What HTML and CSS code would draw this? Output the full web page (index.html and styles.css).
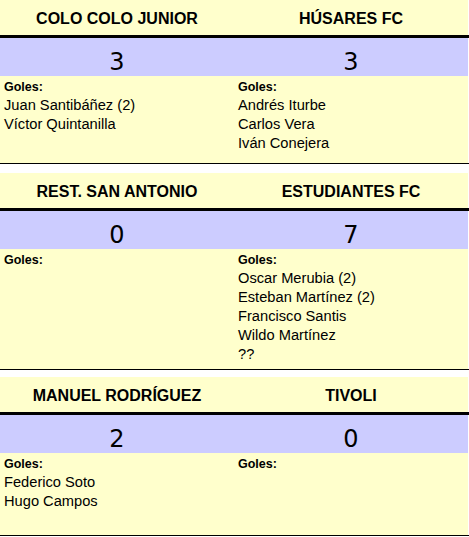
FILE: index.html
```html
<!DOCTYPE html>
<html lang="es">
<head>
<meta charset="utf-8">
<title>Resultados</title>
<link rel="stylesheet" href="styles.css">
</head>
<body>
<div class="match match--1">
  <div class="row row--teams">
    <div class="team">COLO COLO JUNIOR</div>
    <div class="team">HÚSARES FC</div>
  </div>
  <div class="row row--score">
    <div class="score">3</div>
    <div class="score">3</div>
  </div>
  <div class="row row--goals">
    <div class="goals">
      <div class="goals-title">Goles:</div>
      <div class="scorer">Juan Santibáñez (2)</div>
      <div class="scorer">Víctor Quintanilla</div>
    </div>
    <div class="goals">
      <div class="goals-title">Goles:</div>
      <div class="scorer">Andrés Iturbe</div>
      <div class="scorer">Carlos Vera</div>
      <div class="scorer">Iván Conejera</div>
    </div>
  </div>
</div>

<div class="match match--2">
  <div class="row row--teams">
    <div class="team">REST. SAN ANTONIO</div>
    <div class="team">ESTUDIANTES FC</div>
  </div>
  <div class="row row--score">
    <div class="score">0</div>
    <div class="score">7</div>
  </div>
  <div class="row row--goals">
    <div class="goals">
      <div class="goals-title">Goles:</div>
    </div>
    <div class="goals">
      <div class="goals-title">Goles:</div>
      <div class="scorer">Oscar Merubia (2)</div>
      <div class="scorer">Esteban Martínez (2)</div>
      <div class="scorer">Francisco Santis</div>
      <div class="scorer">Wildo Martínez</div>
      <div class="scorer">??</div>
    </div>
  </div>
</div>

<div class="match match--3">
  <div class="row row--teams">
    <div class="team">MANUEL RODRÍGUEZ</div>
    <div class="team">TIVOLI</div>
  </div>
  <div class="row row--score">
    <div class="score">2</div>
    <div class="score">0</div>
  </div>
  <div class="row row--goals">
    <div class="goals">
      <div class="goals-title">Goles:</div>
      <div class="scorer">Federico Soto</div>
      <div class="scorer">Hugo Campos</div>
    </div>
    <div class="goals">
      <div class="goals-title">Goles:</div>
    </div>
  </div>
</div>
</body>
</html>
```

FILE: styles.css
```css
* {
  box-sizing: border-box;
}

body {
  margin: 0;
  width: 469px;
  background: #ffffff;
  color: #000000;
  font-family: "Liberation Sans", Arial, sans-serif;
}

.match {
  display: flex;
  flex-direction: column;
}

.match--2 {
  margin-top: 9px;
}

.match--3 {
  margin-top: 7px;
}

.row {
  display: grid;
  grid-template-columns: 234px 234px;
}

.row--teams {
  border-bottom: 3px solid #000000;
}

.team {
  height: 35px;
  padding-top: 10px;
  background: #ffffcc;
  font-size: 16px;
  font-weight: bold;
  line-height: 18px;
  text-align: center;
}

.score {
  height: 38px;
  display: flex;
  align-items: flex-end;
  justify-content: center;
  background: #ccccff;
  font-family: "DejaVu Sans", Verdana, sans-serif;
  font-size: 24px;
  line-height: 27px;
}

.row--goals {
  border-bottom: 1px solid #000000;
}

.goals {
  padding: 2px 3px 0 4px;
  background: #ffffcc;
}

.match--1 .goals {
  height: 87px;
}

.match--2 .goals {
  height: 120px;
}

.match--3 .goals {
  height: 82px;
}

.goals-title {
  font-size: 12.5px;
  font-weight: bold;
  line-height: 18px;
}

.scorer {
  font-size: 14.67px;
  line-height: 19px;
}
```
